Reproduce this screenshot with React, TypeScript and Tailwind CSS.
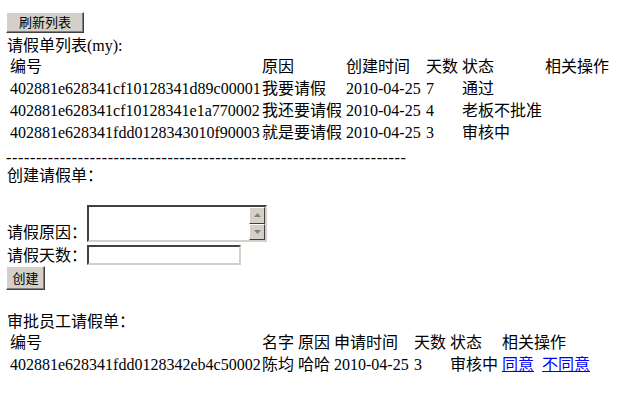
const font = "font-['Liberation_Serif','Noto_Sans_CJK_SC',serif]";

const myLeaves = [
  { id: "402881e628341cf10128341d89c00001", reason: "我要请假", date: "2010-04-25", days: "7", status: "通过" },
  { id: "402881e628341cf10128341e1a770002", reason: "我还要请假", date: "2010-04-25", days: "4", status: "老板不批准" },
  { id: "402881e628341fdd0128343010f90003", reason: "就是要请假", date: "2010-04-25", days: "3", status: "审核中" },
];

// classic win2000 style button
const Btn = ({ label, className }: { label: string; className: string }) => (
  <button
    type="button"
    className={`flex items-center justify-center bg-[#d4d0c8] border border-t-white border-l-white border-r-[#404040] border-b-[#404040] shadow-[inset_-1px_-1px_0_#808080] text-[13px] leading-none text-black ${className}`}
  >
    {label}
  </button>
);

const Arrow = ({ up }: { up?: boolean }) => (
  <div className="w-[16px] h-[17px] bg-[#d4d0c8] border border-t-white border-l-white border-r-[#404040] border-b-[#404040] flex items-center justify-center">
    <svg width="7" height="4" viewBox="0 0 7 4">
      {up ? <path d="M3.5 0 L7 4 L0 4 Z" fill="#808080" /> : <path d="M0 0 L7 0 L3.5 4 Z" fill="#808080" />}
    </svg>
  </div>
);

export default function App() {
  return (
    <div className={`${font} text-[16px] text-black bg-white w-[635px] h-[398px] pl-[7px] pt-[12px] overflow-hidden`}>
      <Btn label="刷新列表" className="w-[78px] h-[21px] -ml-[1px] mb-[3px]" />
      <div className="h-[20px] leading-[20px]">请假单列表(my):</div>

      {/* my leave list */}
      <div className="grid grid-cols-[252px_84px_80px_36px_83px_70px] auto-rows-[22px] items-center pl-[3px] leading-[20px]">
        <span>编号</span>
        <span>原因</span>
        <span>创建时间</span>
        <span>天数</span>
        <span>状态</span>
        <span>相关操作</span>
        {myLeaves.map((l) => (
          <div key={l.id} className="contents">
            <span>{l.id}</span>
            <span>{l.reason}</span>
            <span>{l.date}</span>
            <span>{l.days}</span>
            <span>{l.status}</span>
            <span></span>
          </div>
        ))}
      </div>

      <div className="h-[20px] leading-[24px] mt-[2px] whitespace-nowrap -ml-[1px] tracking-[0.65px]">
        {"-".repeat(67)}
      </div>
      <div className="h-[20px] leading-[20px]">创建请假单：</div>
      <div className="h-[19px]"></div>

      {/* create form */}
      <div className="flex items-end">
        <span className="w-[80px] leading-[18px]">请假原因：</span>
        <div className="w-[180px] h-[37px] flex border-2 border-t-[#404040] border-l-[#404040] border-b-[#d4d0c8] border-r-[#d4d0c8] bg-white">
          <div className="flex-1"></div>
          <div className="flex flex-col">
            <Arrow up />
            <Arrow />
          </div>
        </div>
      </div>
      <div className="flex items-end mt-[3px]">
        <span className="w-[80px] leading-[18px]">请假天数：</span>
        <div className="w-[154px] h-[20px] border-2 border-t-[#404040] border-l-[#404040] border-b-[#d4d0c8] border-r-[#d4d0c8] bg-white"></div>
      </div>
      <Btn label="创建" className="w-[39px] h-[24px] -ml-[1px] mt-[1px]" />
      <div className="h-[22px]"></div>

      {/* approve list */}
      <div className="h-[20px] leading-[20px]">审批员工请假单：</div>
      <div className="grid grid-cols-[252px_36px_36px_80px_36px_52px_100px] auto-rows-[22px] items-center pl-[3px] leading-[20px]">
        <span>编号</span>
        <span>名字</span>
        <span>原因</span>
        <span>申请时间</span>
        <span>天数</span>
        <span>状态</span>
        <span>相关操作</span>
        <span>402881e628341fdd0128342eb4c50002</span>
        <span>陈均</span>
        <span>哈哈</span>
        <span>2010-04-25</span>
        <span>3</span>
        <span>审核中</span>
        <span className="flex gap-[8px]">
          <a href="#" className="text-[#0000ff] underline">同意</a>
          <a href="#" className="text-[#0000ff] underline">不同意</a>
        </span>
      </div>
    </div>
  );
}
